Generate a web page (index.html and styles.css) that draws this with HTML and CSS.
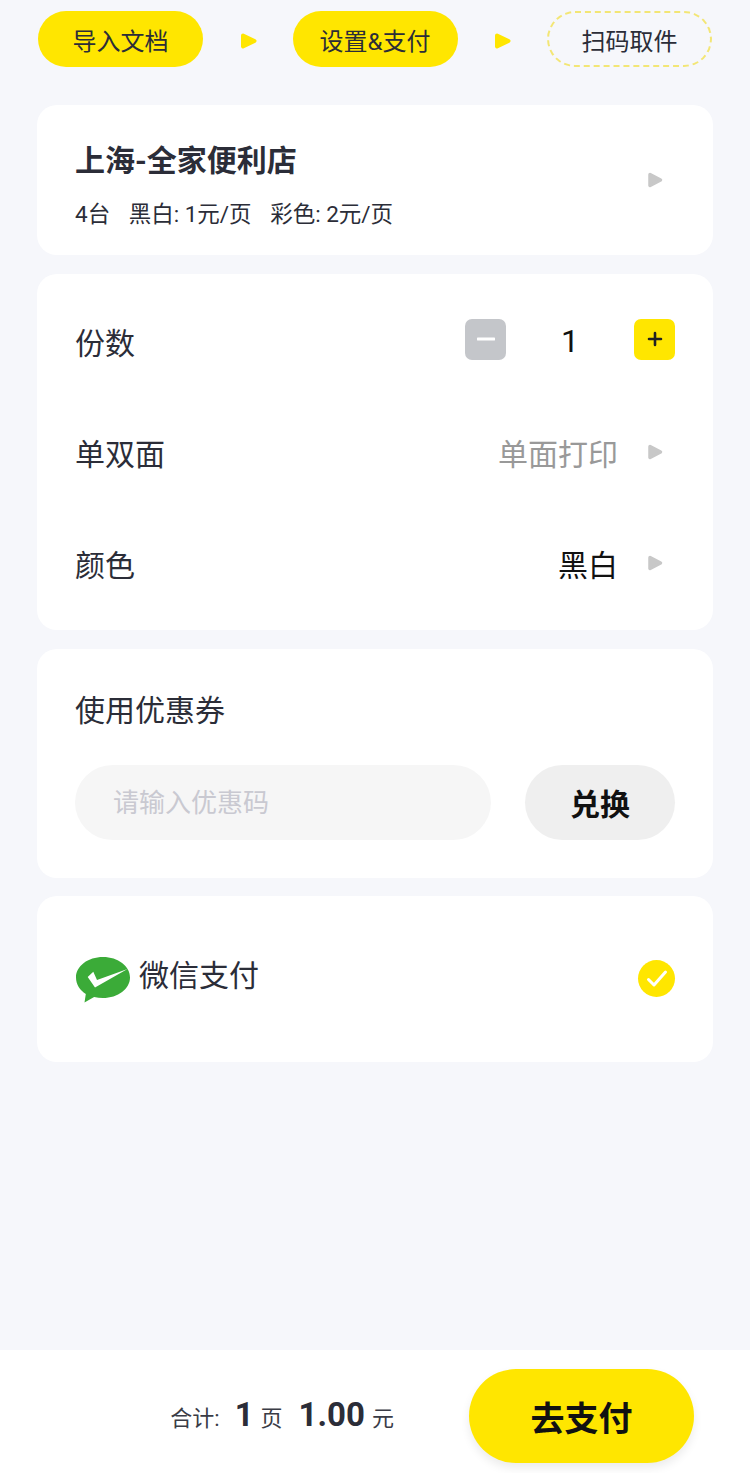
FILE: index.html
```html
<!DOCTYPE html>
<html lang="zh-CN">
<head>
    <meta charset="UTF-8">
    <meta name="viewport" content="width=device-width, initial-scale=1.0">
    <title>设置&amp;支付</title>
    <link rel="stylesheet" href="styles.css">
</head>
<body>
    <div class="page">
        <div class="steps">
            <div class="step stepOn">导入文档</div>
            <svg class="stepArrow" width="16" height="16" viewBox="0 0 16 16"><path d="M2 2.500L13.500 8L2 13.500Z"/></svg>
            <div class="step stepOn">设置&amp;支付</div>
            <svg class="stepArrow" width="16" height="16" viewBox="0 0 16 16"><path d="M2 2.500L13.500 8L2 13.500Z"/></svg>
            <div class="step stepNext">扫码取件</div>
        </div>

        <div class="card shopCard">
            <div class="shopInfo">
                <div class="shopName">上海-全家便利店</div>
                <div class="shopMeta"><span>4台</span><span>黑白: 1元/页</span><span>彩色: 2元/页</span></div>
            </div>
            <svg class="arrow" width="15" height="16" viewBox="0 0 15 16"><path d="M2 2.500L12.500 8L2 13.500Z"/></svg>
        </div>

        <div class="card optionCard">
            <div class="option optionCount">
                <span class="optionLabel">份数</span>
                <div class="counter">
                    <span class="countBtn countMinus"><svg width="18" height="18" viewBox="0 0 18 18"><path d="M1 9h16" stroke="#fff" stroke-width="3" stroke-linecap="round"/></svg></span>
                    <span class="countNum">1</span>
                    <span class="countBtn countPlus"><svg width="16" height="16" viewBox="0 0 16 16"><path d="M2 8h12M8 2v12" stroke="#222" stroke-width="2.600" stroke-linecap="round"/></svg></span>
                </div>
            </div>
            <div class="option">
                <span class="optionLabel">单双面</span>
                <div class="optionRight"><span class="optionValue valueGray">单面打印</span><svg class="arrow" width="15" height="16" viewBox="0 0 15 16"><path d="M2 2.500L12.500 8L2 13.500Z"/></svg></div>
            </div>
            <div class="option">
                <span class="optionLabel">颜色</span>
                <div class="optionRight"><span class="optionValue">黑白</span><svg class="arrow" width="15" height="16" viewBox="0 0 15 16"><path d="M2 2.500L12.500 8L2 13.500Z"/></svg></div>
            </div>
        </div>

        <div class="card couponCard">
            <div class="couponTitle">使用优惠券</div>
            <div class="couponRow">
                <div class="couponInput">请输入优惠码</div>
                <div class="couponBtn">兑换</div>
            </div>
        </div>

        <div class="card payCard">
            <div class="payLeft">
                <svg class="wxIcon" width="54" height="46" viewBox="0 0 54 46">
                    <path d="M27 0C12 0 0 9 0 20.500c0 6.800 3.900 12.800 9.800 16.500L8.500 45.500l9.600-5.600c2.800.7 5.800 1.100 8.900 1.100 15 0 27-9.100 27-20.500S42 0 27 0z" fill="#3bab38"/>
                    <path d="M11.700 20L19 30.500L51.500 12L21 23L17.300 14.700z" fill="#fff"/>
                </svg>
                <span class="payName">微信支付</span>
            </div>
            <span class="payCheck"><svg width="24" height="20" viewBox="0 0 24 20"><path d="M3.500 10.500l5.500 5.500L20.500 3" fill="none" stroke="#fff" stroke-width="3" stroke-linecap="round" stroke-linejoin="round"/></svg></span>
        </div>
    </div>

    <div class="footer">
        <div class="total">
            <span>合计:</span><b class="totalPages">1</b><span>页</span><b class="totalMoney">1.00</b><span>元</span>
        </div>
        <div class="payBtn">去支付</div>
    </div>
</body>
</html>
```

FILE: styles.css
```css
*{
    box-sizing: border-box;
}
html, body{
    margin: 0;
    padding: 0;
}
body{
    min-height: 1473px;
    display: flex;
    flex-direction: column;
    background-color: #f6f7fb;
    color: #2b2d38;
    font-family: Roboto, "Noto Sans CJK SC", sans-serif;
}
.page{
    flex: 1;
    padding: 11px 37px 0 37px;
}
.steps{
    display: flex;
    justify-content: space-between;
    align-items: center;
    padding: 0 1px;
    margin-bottom: 38px;
}
.step{
    width: 165px;
    height: 56px;
    border-radius: 28px;
    display: flex;
    align-items: center;
    justify-content: center;
    font-size: 24px;
}
.stepOn{
    background-color: #ffe600;
}
.stepNext{
    border: 2px dashed #f3e675;
}
.stepArrow{
    margin: 4px 0 0 2px;
    fill: #ffe600;
    stroke: #ffe600;
    stroke-width: 4;
    stroke-linejoin: round;
}
.card{
    background-color: #fff;
    border-radius: 20px;
    margin-bottom: 19px;
}
.arrow{
    fill: #c8c8c8;
    stroke: #c8c8c8;
    stroke-width: 3.5;
    stroke-linejoin: round;
}
.shopCard{
    height: 150px;
    padding: 0 50px 0 38px;
    display: flex;
    align-items: center;
    justify-content: space-between;
}
.shopInfo{
    padding-top: 10px;
}
.shopName{
    font-size: 30px;
    font-weight: bold;
    line-height: 40px;
    margin-bottom: 18px;
}
.shopMeta{
    font-size: 22.5px;
    line-height: 30px;
    display: flex;
    gap: 18.5px;
}
.optionCard{
    height: 356px;
    padding: 11px 38px 0 38px;
}
.option{
    height: 111px;
    display: flex;
    align-items: center;
    justify-content: space-between;
}
.optionLabel{
    font-size: 30px;
}
.optionRight{
    display: flex;
    align-items: center;
    gap: 30px;
    padding-right: 12px;
}
.optionValue{
    font-size: 30px;
    color: #111;
}
.valueGray{
    color: #999;
}
.counter{
    display: flex;
    align-items: center;
    margin-top: -3px;
}
.countBtn{
    width: 41px;
    height: 41px;
    border-radius: 7px;
    display: flex;
    align-items: center;
    justify-content: center;
}
.countMinus{
    background-color: #c4c6ca;
}
.countPlus{
    background-color: #ffe600;
}
.countNum{
    width: 128px;
    padding-top: 3px;
    text-align: center;
    font-size: 32px;
    color: #111;
}
.couponCard{
    height: 229px;
    margin-bottom: 18px;
    padding: 40px 38px 0 38px;
}
.couponTitle{
    font-size: 30px;
    line-height: 44px;
    margin-bottom: 32px;
}
.couponRow{
    display: flex;
    justify-content: space-between;
}
.couponInput{
    width: 416px;
    height: 75px;
    border-radius: 38px;
    background-color: #f6f6f6;
    color: #c9c9d1;
    font-size: 26px;
    padding: 0 0 4px 38px;
    display: flex;
    align-items: center;
}
.couponBtn{
    width: 150px;
    height: 75px;
    border-radius: 38px;
    background-color: #efefef;
    color: #111;
    font-size: 30px;
    font-weight: bold;
    padding-bottom: 2px;
    display: flex;
    align-items: center;
    justify-content: center;
}
.payCard{
    height: 166px;
    padding: 0 38px 0 39px;
    display: flex;
    align-items: center;
    justify-content: space-between;
}
.payLeft{
    display: flex;
    align-items: center;
    gap: 9px;
}
.wxIcon{
    margin-top: 2px;
}
.payName{
    font-size: 30px;
    margin-top: -12px;
}
.payCheck{
    width: 37px;
    height: 37px;
    margin-top: -1px;
    border-radius: 50%;
    background-color: #ffe600;
    display: flex;
    align-items: center;
    justify-content: center;
}
.footer{
    height: 123px;
    background-color: #fff;
    display: flex;
    align-items: center;
    justify-content: flex-end;
    padding: 9px 56px 0 0;
}
.total{
    display: flex;
    align-items: baseline;
    font-size: 22px;
    color: #3a3c46;
    margin: 0 75px 4px 0;
}
.total b{
    font-size: 33px;
    color: #2b2d38;
}
.totalPages{
    margin: 0 7px 0 15px;
}
.totalMoney{
    margin: 0 7px 0 16px;
}
.payBtn{
    width: 225px;
    height: 94px;
    border-radius: 47px;
    background-color: #ffe600;
    color: #111;
    font-size: 34px;
    font-weight: bold;
    display: flex;
    align-items: center;
    justify-content: center;
    box-shadow: rgba(0, 0, 0, 0.08) 0px 5px 10px;
}
```
